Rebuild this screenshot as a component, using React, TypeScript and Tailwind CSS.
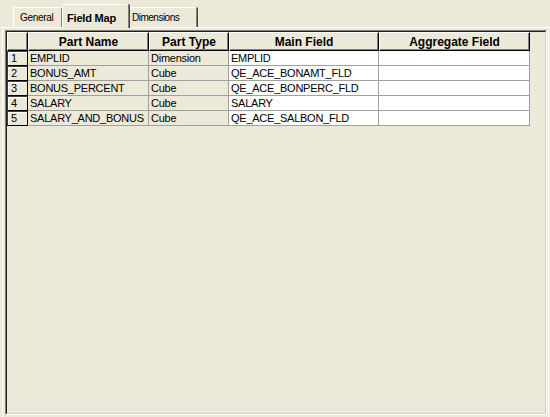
import React from "react";

type Row = { part: string; type: string; main: string; agg: string };

const rows: Row[] = [
  { part: "EMPLID", type: "Dimension", main: "EMPLID", agg: "" },
  { part: "BONUS_AMT", type: "Cube", main: "QE_ACE_BONAMT_FLD", agg: "" },
  { part: "BONUS_PERCENT", type: "Cube", main: "QE_ACE_BONPERC_FLD", agg: "" },
  { part: "SALARY", type: "Cube", main: "SALARY", agg: "" },
  { part: "SALARY_AND_BONUS", type: "Cube", main: "QE_ACE_SALBON_FLD", agg: "" },
];

function HeaderCell({ w, label }: { w: string; label?: string }) {
  return (
    <div
      className={`${w} h-[19px] shrink-0 box-border border-t border-l border-t-white border-l-white border-r border-b border-r-black border-b-black shadow-[inset_-1px_-1px_0_#808080] flex items-center justify-center text-[12px] font-bold leading-none text-black`}
    >
      {label}
    </div>
  );
}

function DataCell({ w, text, white }: { w: string; text: string; white?: boolean }) {
  return (
    <div
      className={`${w} h-[15px] shrink-0 box-border border-r border-b border-[#a0a0a0] ${
        white ? "bg-white" : "bg-[#ece9d8]"
      } pl-[2px] flex items-center text-[11px] leading-none tracking-[-0.25px] text-black whitespace-nowrap overflow-hidden`}
    >
      {text}
    </div>
  );
}

export default function App() {
  return (
    <div className="w-[550px] h-[417px] bg-[#ece9d8] overflow-hidden font-['Liberation_Sans',Arial,sans-serif] text-black select-none">
      {/* tab strip */}
      <div className="h-[27px] flex items-end pl-[13px]">
        <div className="w-[49px] h-[20px] box-border border-t border-l border-white border-r border-r-[#808080] rounded-tl-[2px] rounded-tr-[2px] flex items-center pl-[6px] text-[10px] tracking-[-0.3px] leading-none">
          General
        </div>
        <div className="relative z-10 -mb-px w-[67px] h-[24px] box-border bg-[#ece9d8] border-t border-l border-white border-r border-r-[#808080] shadow-[1px_0_0_#404040] rounded-tl-[2px] rounded-tr-[2px] flex items-start pt-[8px] pl-[4px] text-[11px] font-bold tracking-[-0.2px] leading-none">
          Field Map
        </div>
        <div className="w-[68px] h-[20px] box-border border-t border-l border-white border-r border-r-[#808080] shadow-[1px_0_0_#404040] rounded-tr-[2px] flex items-center pl-[2px] text-[10px] tracking-[-0.5px] leading-none">
          Dimensions
        </div>
      </div>

      {/* tab page */}
      <div className="h-[390px] box-border border-t border-white flex">
        <div className="ml-[2px] w-[547px] h-full box-border border-l border-r border-white pt-[2px] pl-[2px] pr-px">
          {/* grid frame */}
          <div className="w-[542px] h-[385px] box-border border-t border-l border-[#808080] border-r border-b border-r-white border-b-white">
            <div className="w-full h-full box-border border-t border-l border-[#202020] border-r border-b border-r-[#d4d0c8] border-b-[#d4d0c8] bg-[#ece9d8]">
              <div className="flex">
                <HeaderCell w="w-[21px]" />
                <HeaderCell w="w-[121px]" label="Part Name" />
                <HeaderCell w="w-[80px]" label="Part Type" />
                <HeaderCell w="w-[150px]" label="Main Field" />
                <HeaderCell w="w-[151px]" label="Aggregate Field" />
              </div>
              {rows.map((r, i) => (
                <div key={i} className="flex">
                  <div className="w-[21px] h-[15px] shrink-0 box-border border border-[#404040] border-r-black border-b-black shadow-[inset_1px_1px_0_#ffffff] pl-[3px] flex items-center text-[11px] leading-none">
                    {i + 1}
                  </div>
                  <DataCell w="w-[121px]" text={r.part} />
                  <DataCell w="w-[80px]" text={r.type} />
                  <DataCell w="w-[150px]" text={r.main} white />
                  <DataCell w="w-[151px]" text={r.agg} white />
                </div>
              ))}
            </div>
          </div>
        </div>
      </div>
    </div>
  );
}
